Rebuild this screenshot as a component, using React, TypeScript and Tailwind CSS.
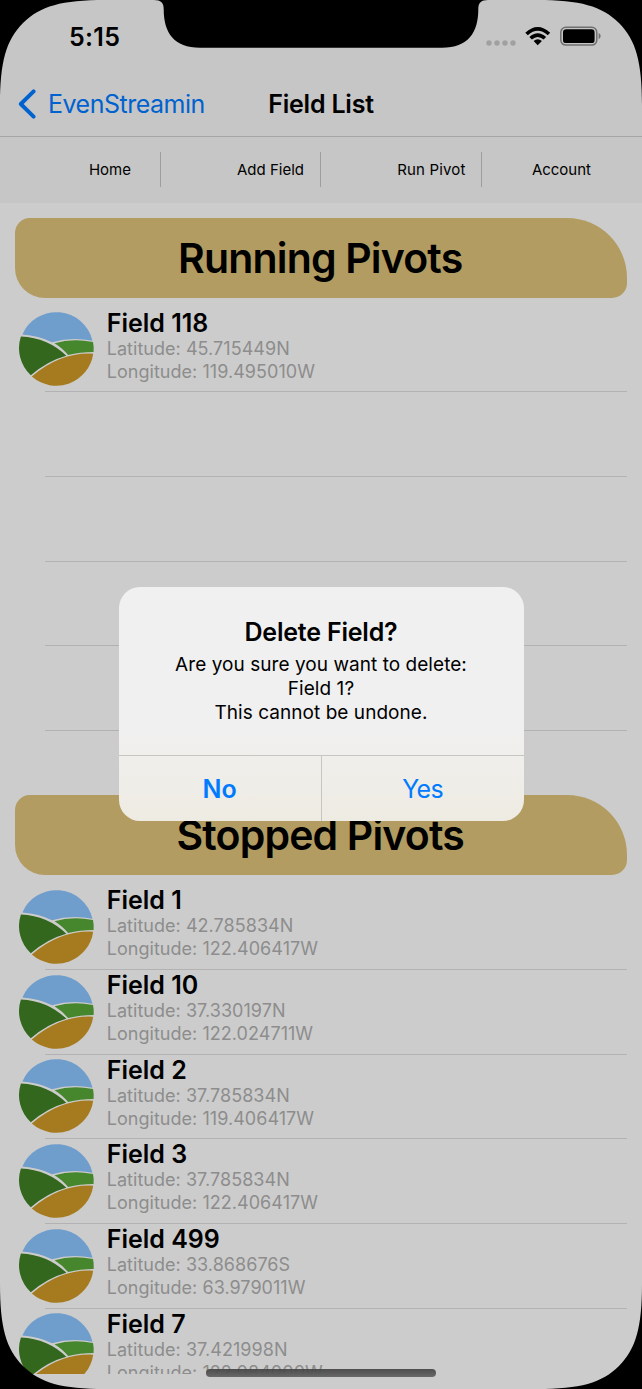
import React from "react";

type Field = { name: string; lat: string; lon: string };

const running: Field[] = [{ name: "Field 118", lat: "45.715449N", lon: "119.495010W" }];

const stopped: Field[] = [
  { name: "Field 1", lat: "42.785834N", lon: "122.406417W" },
  { name: "Field 10", lat: "37.330197N", lon: "122.024711W" },
  { name: "Field 2", lat: "37.785834N", lon: "119.406417W" },
  { name: "Field 3", lat: "37.785834N", lon: "122.406417W" },
  { name: "Field 499", lat: "33.868676S", lon: "63.979011W" },
  { name: "Field 7", lat: "37.421998N", lon: "122.084000W" },
];

function FieldIcon() {
  return (
    <svg viewBox="0 0 75 75" className="mt-[4.6px] h-[75px] w-[75px] shrink-0">
      <path d="M3.4 23.4A37.1 37.1 0 0 1 73.5 29.7Q52 25.8 33 31.2Q20 24.6 3.4 23.4Z" fill="#6f9dcc" />
      <path d="M1.9 25.4Q29 26.7 47.3 44.7Q28 50 11.8 64.3A37.3 37.3 0 0 1 1.9 25.4Z" fill="#32671d" />
      <path d="M35.6 32.3Q53 27.1 74 31.1Q75 36 74.6 41Q61 41 49.1 44.1Q44 37.7 35.6 32.3Z" fill="#46862c" />
      <path d="M12.8 65.6Q41 41.1 74.2 42.7A37.3 37.3 0 0 1 12.8 65.6Z" fill="#a67b20" />
    </svg>
  );
}

function Row({ field }: { field?: Field }) {
  return (
    <li className="relative flex h-[84.72px] shrink-0 pl-[18.7px]">
      {field && (
        <>
          <FieldIcon />
          <div className="ml-[13px] whitespace-nowrap pt-[2px]">
            <div className="h-[28px] text-[25px] font-semibold leading-[28px] text-black">{field.name}</div>
            <div className="h-[23px] text-[18px] leading-[24px] tracking-[0.04px] text-[#8d8d8d]">Latitude: {field.lat}</div>
            <div className="h-[23px] text-[18px] leading-[24px] tracking-[0.04px] text-[#8d8d8d]">Longitude: {field.lon}</div>
          </div>
        </>
      )}
      <span className="absolute bottom-[-1px] left-[45px] right-[15px] h-px bg-[#b2b2b2]" />
    </li>
  );
}

function Banner({ children }: { children: React.ReactNode }) {
  return (
    <h2 className="mx-[15px] h-[80.3px] shrink-0 rounded-bl-[30px] rounded-br-[15px] rounded-tl-[15px] rounded-tr-[60px] bg-[#b29c61] pr-[1.6px] text-center text-[41px] font-semibold leading-[80px] tracking-[-0.83px] text-black">
      {children}
    </h2>
  );
}

function StatusBar() {
  return (
    <div className="flex h-[71px] items-start justify-between pl-[69px] pr-[41px]">
      <span className="pt-[21px] text-[25px] font-semibold leading-[32px] tracking-[0.3px] text-black">5:15</span>
      <svg viewBox="0 0 116 22" className="mt-[25px] h-[22px] w-[116px]">
        <g fill="#a0a0a0">
          <circle cx="4" cy="18" r="2.7" />
          <circle cx="12" cy="18" r="2.7" />
          <circle cx="20" cy="18" r="2.7" />
          <circle cx="28" cy="18" r="2.7" />
        </g>
        <g fill="#000">
          <path d="M40.3 7.7Q52.7 -3.7 65.2 7.7L62.7 10.2Q52.7 1.4 42.8 10.2Z" />
          <path d="M44.4 11.9Q52.7 4.4 61.1 11.9L58.6 14.4Q52.7 9.4 46.9 14.4Z" />
          <path d="M48.6 16.1Q52.7 12.4 56.9 16.1L52.7 20.3Z" />
        </g>
        <rect x="75.8" y="2.2" width="36" height="17.9" rx="5" fill="none" stroke="#707070" strokeWidth="1.5" />
        <rect x="78" y="4.2" width="31.6" height="13.9" rx="3.2" fill="#000" />
        <path d="M113.6 8Q115.7 9 115.7 11.1Q115.7 13.2 113.6 14.2Z" fill="#707070" />
      </svg>
    </div>
  );
}

function MenuItem({ label, className }: { label: string; className: string }) {
  return (
    <div className={"flex h-[35px] w-[160.5px] items-center justify-end pt-[2px] text-[15px] text-black " + className}>
      {label}
    </div>
  );
}

function DeleteAlert() {
  return (
    <div
      role="alertdialog"
      className="absolute left-[118.5px] top-[587px] flex h-[234.4px] w-[405px] flex-col overflow-hidden rounded-[21px] bg-linear-to-b from-[#f0f0f0] from-60% to-[#eeebe2] text-center"
    >
      <div className="h-[168px] shrink-0 pt-[29px] text-black">
        <div className="h-[37px] text-[25px] font-semibold leading-[32px] tracking-[-0.2px]">Delete Field?</div>
        <p className="text-[19px] leading-[24px] tracking-[0.05px]">
          Are you sure you want to delete:
          <br />
          Field 1?
          <br />
          This cannot be undone.
        </p>
      </div>
      <div className="flex flex-1 border-t border-[#c6c6c3] text-[25px] leading-[66px] text-[#007aff]">
        <button className="w-[203.3px] border-r border-[#c6c6c3] font-semibold">No</button>
        <button className="flex-1 tracking-[-0.6px]">Yes</button>
      </div>
    </div>
  );
}

function DeviceFrame() {
  return (
    <svg viewBox="0 0 642 1389" className="pointer-events-none absolute inset-0 h-[1389px] w-[642px]">
      <path d="M0 0H105C62 0 40 6 23 23C6 40 0 62 0 105Z" />
      <path d="M642 0H537C580 0 602 6 619 23C636 40 642 62 642 105Z" />
      <path d="M0 1389H105C62 1389 40 1383 23 1366C6 1349 0 1327 0 1284Z" />
      <path d="M642 1389H537C580 1389 602 1383 619 1366C636 1349 642 1327 642 1284Z" />
      <path d="M154 0C161 0 163.7 3 163.7 9C163.7 33 174 47.7 200 47.7H442C468 47.7 478.3 33 478.3 9C478.3 3 481 0 488 0Z" />
    </svg>
  );
}

export default function App() {
  return (
    <div className="relative h-[1389px] w-[642px] overflow-hidden bg-[#cccccc] font-['Inter',sans-serif]">
      <div className="flex h-[1374px] flex-col overflow-hidden">
        <header className="h-[202.6px] shrink-0 bg-[#c6c6c6]">
          <StatusBar />
          <nav className="grid h-[66px] grid-cols-[1fr_auto_1fr] items-center border-b border-[#a5a5a5] text-[25px]">
            <a className="flex items-center pl-[18px] tracking-[-0.5px] text-[#0062cf]">
              <svg viewBox="0 0 18 30" className="mr-[12px] h-[30px] w-[18px]">
                <path d="M15.6 2.4L2.8 15L15.6 27.6" fill="none" stroke="currentColor" strokeWidth="3.9" strokeLinecap="round" strokeLinejoin="round" />
              </svg>
              <span className="pt-[2px]">EvenStreamin</span>
            </a>
            <h1 className="pt-[2px] font-semibold tracking-[-0.2px] text-black">Field List</h1>
            <span />
          </nav>
          <div className="flex pt-[15px]">
            <MenuItem label="Home" className="border-r border-[#9e9e9e] pr-[28.5px]" />
            <MenuItem label="Add Field" className="border-r border-[#9e9e9e] pr-[16px]" />
            <MenuItem label="Run Pivot" className="border-r border-[#9e9e9e] pr-[15px] tracking-[0.15px]" />
            <MenuItem label="Account" className="pr-[51px]" />
          </div>
        </header>
        <section className="flex h-[592.4px] shrink-0 flex-col pt-[15px]">
          <Banner>Running Pivots</Banner>
          <ul className="mt-[8.7px] flex flex-col">
            {running.map((f) => (
              <Row key={f.name} field={f} />
            ))}
            <Row />
            <Row />
            <Row />
            <Row />
          </ul>
        </section>
        <section className="flex flex-col">
          <Banner>Stopped Pivots</Banner>
          <ul className="mt-[9px] flex flex-col">
            {stopped.map((f) => (
              <Row key={f.name} field={f} />
            ))}
          </ul>
        </section>
      </div>
      <div className="absolute left-[206px] top-[1369px] h-[8px] w-[230px] rounded-full bg-linear-to-b from-[#404040]/90 to-[#686868]" />
      <DeleteAlert />
      <DeviceFrame />
    </div>
  );
}
